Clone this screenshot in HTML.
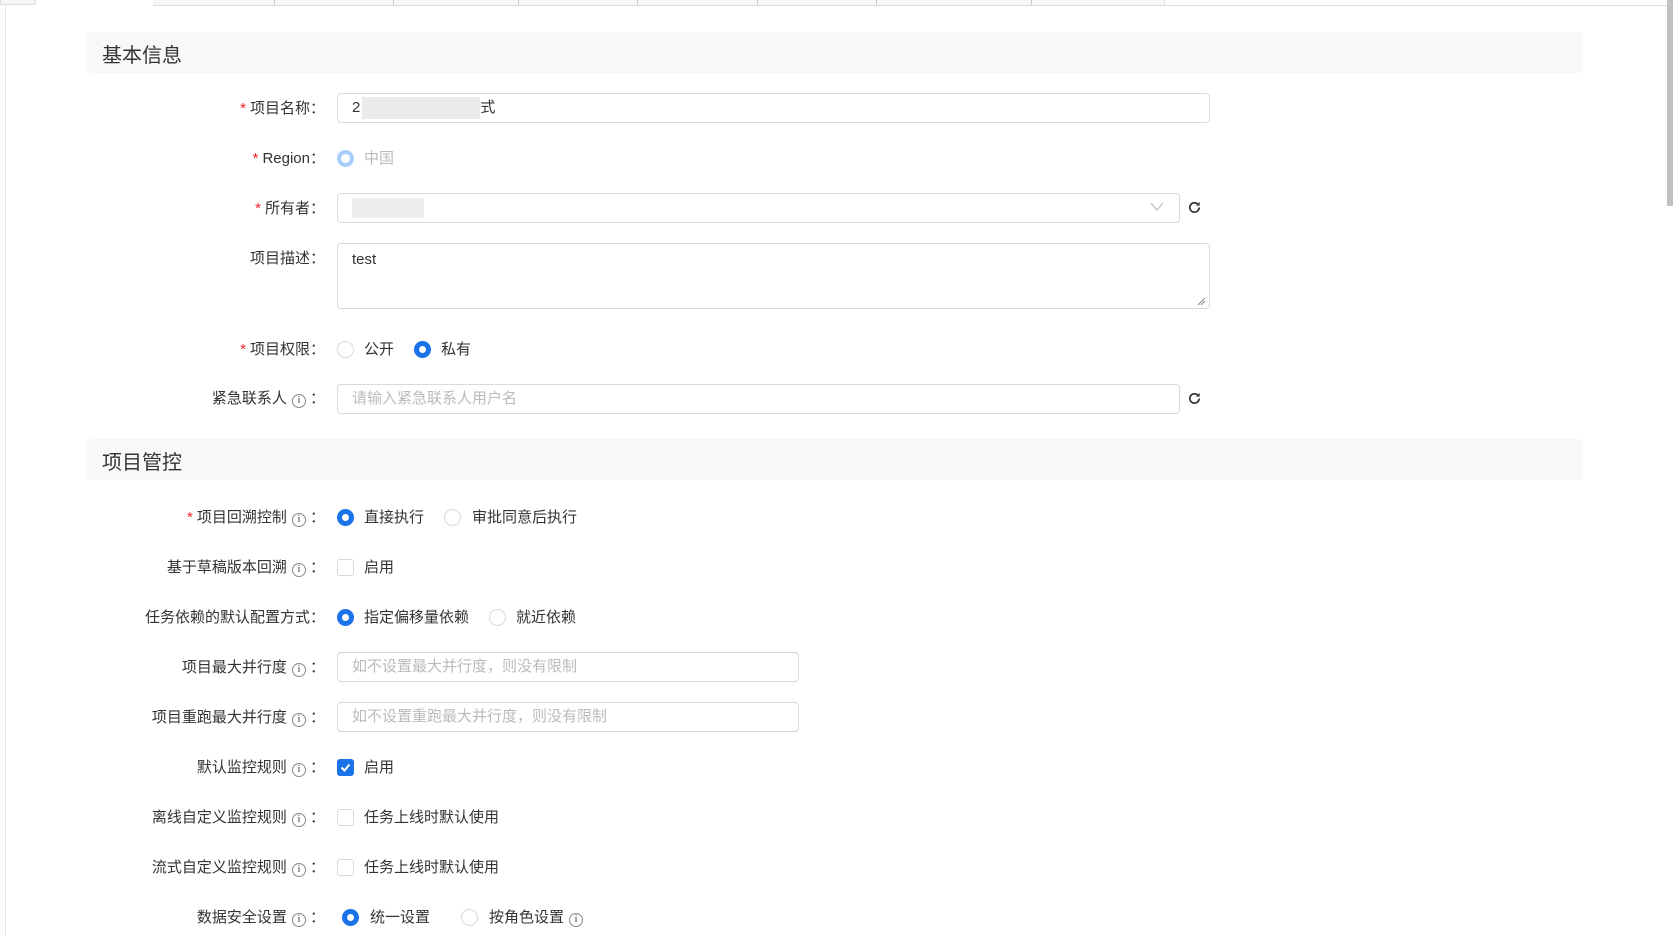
<!DOCTYPE html>
<html><head><meta charset="utf-8"><style>
*{box-sizing:border-box;margin:0;padding:0}
body{width:1673px;height:936px;overflow:hidden;background:#fff;font-family:"Liberation Sans","Noto Sans CJK SC",sans-serif;font-size:15px;color:#333;position:relative}
.a{position:absolute}
.sec{position:absolute;left:87px;width:1496px;height:41px;background:#f7f8fa;border-radius:4px}
.sec span{position:absolute;left:15px;top:7px;font-size:20px;color:#333}
.lab{position:absolute;right:1348px;height:20px;line-height:20px;white-space:nowrap;color:#333;margin-top:1px}
.lab i{color:#f5222d;font-style:normal;margin-right:4px}
.inp{position:absolute;left:337px;height:30px;border:1px solid #d9d9d9;border-radius:4px;background:#fff;line-height:28px;padding-left:14px;color:#333}
.ph{color:#bbb}
.radio{position:absolute;width:17px;height:17px;border-radius:50%;border:1px solid #d9d9d9;background:#fff}
.radio.on{border:5px solid #1a73e8}
.cb{position:absolute;width:17px;height:17px;border-radius:3px;border:1px solid #d9d9d9;background:#fff}
.t{position:absolute;height:20px;line-height:20px;white-space:nowrap;margin-top:1px}
.info{display:inline-block;width:14px;height:14px;border:1.3px solid #888;border-radius:50%;font-size:10px;line-height:12px;text-align:center;color:#888;font-family:"Liberation Serif",serif;font-weight:bold;vertical-align:0px;margin-left:5px}
</style></head><body>
<div class="a" style="left:0;top:0;width:36px;height:5px;border:1px solid #ddd;border-top:0;background:#f5f6f8"></div>
<div class="a" style="left:5px;top:5px;width:1px;height:931px;background:#e8e8e8"></div>
<div class="a" style="left:153px;top:0;width:1514px;height:6px;background:#f7f8fa;border-bottom:1px solid #dcdcdc"></div>
<div class="a" style="left:1164px;top:0;width:503px;height:5px;background:#fff;border-left:1px solid #ddd"></div>
<div class="a" style="left:274px;top:0;width:1px;height:5px;background:#ccc"></div>
<div class="a" style="left:393px;top:0;width:1px;height:5px;background:#ccc"></div>
<div class="a" style="left:518px;top:0;width:1px;height:5px;background:#ccc"></div>
<div class="a" style="left:637px;top:0;width:1px;height:5px;background:#ccc"></div>
<div class="a" style="left:757px;top:0;width:1px;height:5px;background:#ccc"></div>
<div class="a" style="left:876px;top:0;width:1px;height:5px;background:#ccc"></div>
<div class="a" style="left:1031px;top:0;width:1px;height:5px;background:#ccc"></div>
<div class="a" style="left:1667px;top:0;width:6px;height:206px;background:#c1c1c1"></div>

<div class="sec" style="top:32px"><span>基本信息</span></div>

<div class="lab" style="top:98px"><i>*</i>项目名称：</div>
<div class="inp" style="top:93px;width:873px">2<span style="display:inline-block;width:118px;height:22px;background:#ebebeb;vertical-align:middle;margin:0 0 0 2px"></span>式</div>

<div class="lab" style="top:148px"><i>*</i>Region：</div>
<div class="radio" style="left:337px;top:150px;border:4px solid #a9cdfb"></div>
<div class="t" style="left:364px;top:148px;color:#bbb">中国</div>

<div class="lab" style="top:198px"><i>*</i>所有者：</div>
<div class="inp" style="top:193px;width:843px"><span style="display:inline-block;width:72px;height:20px;background:#eeeeee;vertical-align:middle"></span></div>
<svg class="a" style="left:1150px;top:202px" width="14" height="10" viewBox="0 0 14 10"><path d="M1 1l6 7 6-7" fill="none" stroke="#bbb" stroke-width="1.2"/></svg>

<div class="lab" style="top:248px">项目描述：</div>
<div class="inp" style="top:243px;width:873px;height:66px;line-height:20px;padding-top:6px">test</div>
<svg class="a" style="left:1197px;top:297px" width="9" height="9"><path d="M1 8L8 1M4 8L8 4" stroke="#888" stroke-width="1"/></svg>

<div class="lab" style="top:339px"><i>*</i>项目权限：</div>
<div class="radio" style="left:337px;top:341px"></div>
<div class="t" style="left:364px;top:339px">公开</div>
<div class="radio on" style="left:414px;top:341px"></div>
<div class="t" style="left:441px;top:339px">私有</div>

<div class="lab" style="top:388px">紧急联系人<span class="info">i</span> ：</div>
<div class="inp ph" style="top:384px;width:843px">请输入紧急联系人用户名</div>

<svg class="a" style="left:1187px;top:200px" width="15" height="15" viewBox="0 0 16 16"><path d="M13 8a5 5 0 1 1-1.5-3.6" fill="none" stroke="#333" stroke-width="1.8"/><path d="M13.5 2v4h-4z" fill="#333"/></svg>
<svg class="a" style="left:1187px;top:391px" width="15" height="15" viewBox="0 0 16 16"><path d="M13 8a5 5 0 1 1-1.5-3.6" fill="none" stroke="#333" stroke-width="1.8"/><path d="M13.5 2v4h-4z" fill="#333"/></svg>

<div class="sec" style="top:439px"><span>项目管控</span></div>

<div class="lab" style="top:507px"><i>*</i>项目回溯控制<span class="info">i</span> ：</div>
<div class="radio on" style="left:337px;top:509px"></div>
<div class="t" style="left:364px;top:507px">直接执行</div>
<div class="radio" style="left:444px;top:509px"></div>
<div class="t" style="left:472px;top:507px">审批同意后执行</div>

<div class="lab" style="top:557px">基于草稿版本回溯<span class="info">i</span> ：</div>
<div class="cb" style="left:337px;top:559px"></div>
<div class="t" style="left:364px;top:557px">启用</div>

<div class="lab" style="top:607px">任务依赖的默认配置方式：</div>
<div class="radio on" style="left:337px;top:609px"></div>
<div class="t" style="left:364px;top:607px">指定偏移量依赖</div>
<div class="radio" style="left:489px;top:609px"></div>
<div class="t" style="left:516px;top:607px">就近依赖</div>

<div class="lab" style="top:657px">项目最大并行度<span class="info">i</span> ：</div>
<div class="inp ph" style="top:652px;width:462px">如不设置最大并行度，则没有限制</div>

<div class="lab" style="top:707px">项目重跑最大并行度<span class="info">i</span> ：</div>
<div class="inp ph" style="top:702px;width:462px">如不设置重跑最大并行度，则没有限制</div>

<div class="lab" style="top:757px">默认监控规则<span class="info">i</span> ：</div>
<div class="cb" style="left:337px;top:759px;background:#1a73e8;border-color:#1a73e8"><svg width="15" height="15" style="position:absolute;left:0;top:0"><path d="M3.5 7.5l3 3 5-6" fill="none" stroke="#fff" stroke-width="2"/></svg></div>
<div class="t" style="left:364px;top:757px">启用</div>

<div class="lab" style="top:807px">离线自定义监控规则<span class="info">i</span> ：</div>
<div class="cb" style="left:337px;top:809px"></div>
<div class="t" style="left:364px;top:807px">任务上线时默认使用</div>

<div class="lab" style="top:857px">流式自定义监控规则<span class="info">i</span> ：</div>
<div class="cb" style="left:337px;top:859px"></div>
<div class="t" style="left:364px;top:857px">任务上线时默认使用</div>

<div class="lab" style="top:907px">数据安全设置<span class="info">i</span> ：</div>
<div class="radio on" style="left:342px;top:909px"></div>
<div class="t" style="left:370px;top:907px">统一设置</div>
<div class="radio" style="left:461px;top:909px"></div>
<div class="t" style="left:489px;top:907px">按角色设置<span class="info">i</span></div>
</body></html>
